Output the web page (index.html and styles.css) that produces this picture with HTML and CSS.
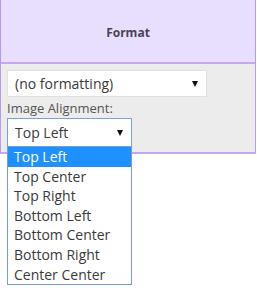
FILE: index.html
```html
<!DOCTYPE html>
<html>
<head>
<meta charset="utf-8">
<link rel="stylesheet" href="styles.css">
</head>
<body>
<div class="panel">
  <div class="header">Format</div>
  <div class="body">
    <div class="select wide">
      <span class="value">(no formatting)</span>
      <span class="arrow"></span>
    </div>
    <div class="label">Image Alignment:</div>
    <div class="dropwrap">
      <div class="select narrow focused">
        <span class="value">Top Left</span>
        <span class="arrow"></span>
      </div>
      <ul class="list">
        <li class="selected">Top Left</li>
        <li>Top Center</li>
        <li>Top Right</li>
        <li>Bottom Left</li>
        <li>Bottom Center</li>
        <li>Bottom Right</li>
        <li>Center Center</li>
      </ul>
    </div>
  </div>
</div>
</body>
</html>
```
FILE: styles.css
```css
html, body {
  margin: 0;
  padding: 0;
  background: #ffffff;
}
body {
  font-family: "Open Sans", "DejaVu Sans", sans-serif;
  color: #333;
  width: 257px;
  height: 288px;
  overflow: hidden;
}
.panel {
  width: 256px;
  border-left: 1px solid #b89bf0;
  border-right: 1px solid #b89bf0;
  border-bottom: 2px solid #c3a8f5;
  box-sizing: border-box;
}
.header {
  height: 64px;
  background: #e8dfff;
  border-bottom: 2px solid #c3a8f5;
  box-sizing: border-box;
  display: flex;
  align-items: center;
  justify-content: center;
  font-size: 12px;
  font-weight: 700;
  color: #4a4452;
  padding-top: 2px;
}
.body {
  background: #ececec;
  padding: 6px 0 0 6px;
  height: 88px;
  box-sizing: border-box;
  display: flex;
  flex-direction: column;
  align-items: flex-start;
}
.select {
  background: #fff;
  border: 1px solid #e0e0e0;
  box-sizing: border-box;
  display: flex;
  align-items: center;
  justify-content: space-between;
  padding: 0 7px 0 7px;
  font-size: 14px;
  color: #3a3a3a;
}
.wide {
  width: 200px;
  height: 27px;
}
.narrow {
  width: 125px;
  height: 29px;
}
.focused {
  border: 1px solid #7aa2d8;
}
.arrow {
  width: 0;
  height: 0;
  border-left: 3.5px solid transparent;
  border-right: 3.5px solid transparent;
  border-top: 6px solid #111;
  margin-right: 1px;
}
.label {
  font-size: 13px;
  color: #555;
  margin: 3px 0 2px 0;
  line-height: 16px;
}
.dropwrap {
  position: relative;
}
.list {
  position: absolute;
  top: 28px;
  left: 0;
  width: 125px;
  margin: 0;
  padding: 0;
  list-style: none;
  background: #fff;
  border: 1px solid #7a9bd0;
  box-sizing: border-box;
  z-index: 2;
}
.list li {
  height: 19.6px;
  line-height: 19.6px;
  font-size: 14px;
  padding-left: 6px;
  color: #3a3a3a;
}
.list li.selected {
  background: #1e90ff;
  color: #fff;
}
```
